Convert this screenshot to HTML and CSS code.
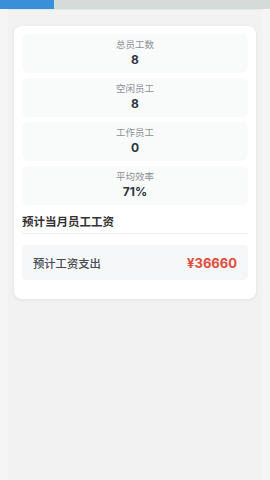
FILE: index.html
```html
<!DOCTYPE html>
<html lang="zh">
<head>
    <meta charset="UTF-8">
    <meta name="viewport" content="width=device-width, initial-scale=1.0">
    <title>员工统计</title>
    <link rel="stylesheet" href="styles.css">
</head>
<body>
    <div class="tabs">
        <div class="tab active"></div>
        <div class="tab"></div>
    </div>
    <div class="page">
        <div class="card">
            <div class="stat">
                <div class="label">总员工数</div>
                <div class="value">8</div>
            </div>
            <div class="stat">
                <div class="label">空闲员工</div>
                <div class="value">8</div>
            </div>
            <div class="stat">
                <div class="label">工作员工</div>
                <div class="value">0</div>
            </div>
            <div class="stat">
                <div class="label">平均效率</div>
                <div class="value">71%</div>
            </div>
            <h3 class="section-title">预计当月员工工资</h3>
            <div class="salary">
                <span class="salary-label">预计工资支出</span>
                <span class="salary-value">¥36660</span>
            </div>
        </div>
    </div>
</body>
</html>
```

FILE: styles.css
```css
body { margin: 0; background: #f4f5f4; font-family: Inter, "Noto Sans CJK SC", sans-serif; }
.tabs { display: flex; height: 9px; }
.tab { flex: 1; background: #d5dbd9; }
.tab.active { flex: none; width: 54px; background: #3a8fd9; }
.page { margin: 0 8px; background: #f2f2f2; padding: 16px 6px; min-height: 439px; border-top: 1px solid #e6e8e7; }
.card { background: #fff; border-radius: 8px; padding: 8px 8px 19px; box-shadow: 0 1px 4px rgba(0,0,0,0.07); }
.stat { background: #f9fafa; border-radius: 6px; text-align: center; padding: 4px 0 5px; margin-bottom: 5px; }
.label { font-size: 9.5px; line-height: 14px; color: #8d9196; }
.value { font-size: 12px; line-height: 16px; font-weight: 700; color: #2c3440; }
.section-title { margin: 8px 0 0; font-size: 11.5px; line-height: 18px; font-weight: 700; color: #333; padding-bottom: 2px; border-bottom: 1px solid #eeeeee; }
.salary { display: flex; justify-content: space-between; align-items: center; margin-top: 11px; height: 35px; padding: 0 11px; background: #f6f7f8; border-radius: 4px; }
.salary-label { font-size: 11.3px; color: #444a52; font-weight: 500; }
.salary-value { font-size: 13px; font-weight: 700; color: #e04b3c; }
```
